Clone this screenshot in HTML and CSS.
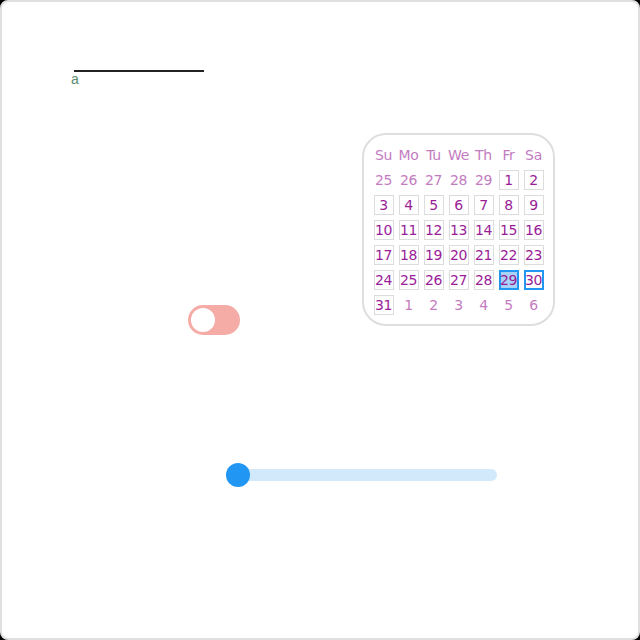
FILE: index.html
```html
<!DOCTYPE html>
<html>
<head>
<meta charset="utf-8">
<link rel="stylesheet" href="styles.css">
</head>
<body>
<div class="frame">
  <div class="field">
    <div class="field-line"></div>
    <div class="field-label">a</div>
  </div>
  <div class="row">
    <div class="toggle"><span class="knob"></span></div>
    <div class="calendar">
      <span class="hd">Su</span><span class="hd">Mo</span><span class="hd">Tu</span><span class="hd">We</span><span class="hd">Th</span><span class="hd">Fr</span><span class="hd">Sa</span>
      <span class="cell out">25</span><span class="cell out">26</span><span class="cell out">27</span><span class="cell out">28</span><span class="cell out">29</span><span class="cell"><span class="day">1</span></span><span class="cell"><span class="day">2</span></span>
      <span class="cell"><span class="day">3</span></span><span class="cell"><span class="day">4</span></span><span class="cell"><span class="day">5</span></span><span class="cell"><span class="day">6</span></span><span class="cell"><span class="day">7</span></span><span class="cell"><span class="day">8</span></span><span class="cell"><span class="day">9</span></span>
      <span class="cell"><span class="day">10</span></span><span class="cell"><span class="day">11</span></span><span class="cell"><span class="day">12</span></span><span class="cell"><span class="day">13</span></span><span class="cell"><span class="day">14</span></span><span class="cell"><span class="day">15</span></span><span class="cell"><span class="day">16</span></span>
      <span class="cell"><span class="day">17</span></span><span class="cell"><span class="day">18</span></span><span class="cell"><span class="day">19</span></span><span class="cell"><span class="day">20</span></span><span class="cell"><span class="day">21</span></span><span class="cell"><span class="day">22</span></span><span class="cell"><span class="day">23</span></span>
      <span class="cell"><span class="day">24</span></span><span class="cell"><span class="day">25</span></span><span class="cell"><span class="day">26</span></span><span class="cell"><span class="day">27</span></span><span class="cell"><span class="day">28</span></span><span class="cell"><span class="day selected">29</span></span><span class="cell"><span class="day today">30</span></span>
      <span class="cell"><span class="day">31</span></span><span class="cell out">1</span><span class="cell out">2</span><span class="cell out">3</span><span class="cell out">4</span><span class="cell out">5</span><span class="cell out">6</span>
    </div>
  </div>
  <div class="slider">
    <div class="track"><span class="thumb"></span></div>
  </div>
</div>
</body>
</html>
```
FILE: styles.css
```css
html {
  background: #000;
}
body {
  margin: 0;
  background: #000;
}
.frame {
  width: 640px;
  height: 640px;
  box-sizing: border-box;
  border: 2px solid #e0e0e0;
  border-radius: 8px;
  background: #fff;
  overflow: hidden;
}
.field {
  margin: 68px 0 0 72px;
  width: 130px;
}
.field-line {
  height: 2px;
  background: #222;
}
.field-label {
  margin-left: -3px;
  font-family: "Liberation Sans", sans-serif;
  font-size: 14px;
  line-height: 14px;
  color: #5a8a70;
}
.row {
  display: flex;
  align-items: flex-start;
  margin-top: 47px;
}
.toggle {
  margin: 172px 0 0 186px;
  width: 52px;
  height: 30px;
  box-sizing: border-box;
  padding: 3px;
  border-radius: 15px;
  background: #f5aca6;
  display: flex;
  align-items: center;
}
.knob {
  width: 24px;
  height: 24px;
  border-radius: 50%;
  background: #fff;
}
.calendar {
  margin-left: 122px;
  width: 193px;
  height: 193px;
  box-sizing: border-box;
  border: 2px solid #dedede;
  border-radius: 24px;
  padding: 7px;
  display: grid;
  grid-template-columns: repeat(7, 25px);
  grid-template-rows: repeat(7, 25px);
  font-family: "DejaVu Sans", sans-serif;
  font-size: 14px;
  letter-spacing: -0.3px;
  color: #9a1d98;
}
.hd, .cell {
  display: flex;
  align-items: center;
  justify-content: center;
}
.hd, .out {
  color: #c47cc1;
}
.day {
  width: 20px;
  height: 20px;
  box-sizing: border-box;
  border: 1px solid #dcdcdc;
  display: flex;
  align-items: center;
  justify-content: center;
}
.day.selected {
  border: 2px solid #2196f3;
  background: #a8d3f7;
}
.day.today {
  border: 2px solid #2196f3;
}
.slider {
  margin: 134px 0 0 224px;
  width: 271px;
}
.track {
  height: 12px;
  border-radius: 6px;
  background: #d2e8fb;
  display: flex;
  align-items: center;
}
.thumb {
  width: 24px;
  height: 24px;
  flex: none;
  border-radius: 50%;
  background: #2196f3;
}
```
